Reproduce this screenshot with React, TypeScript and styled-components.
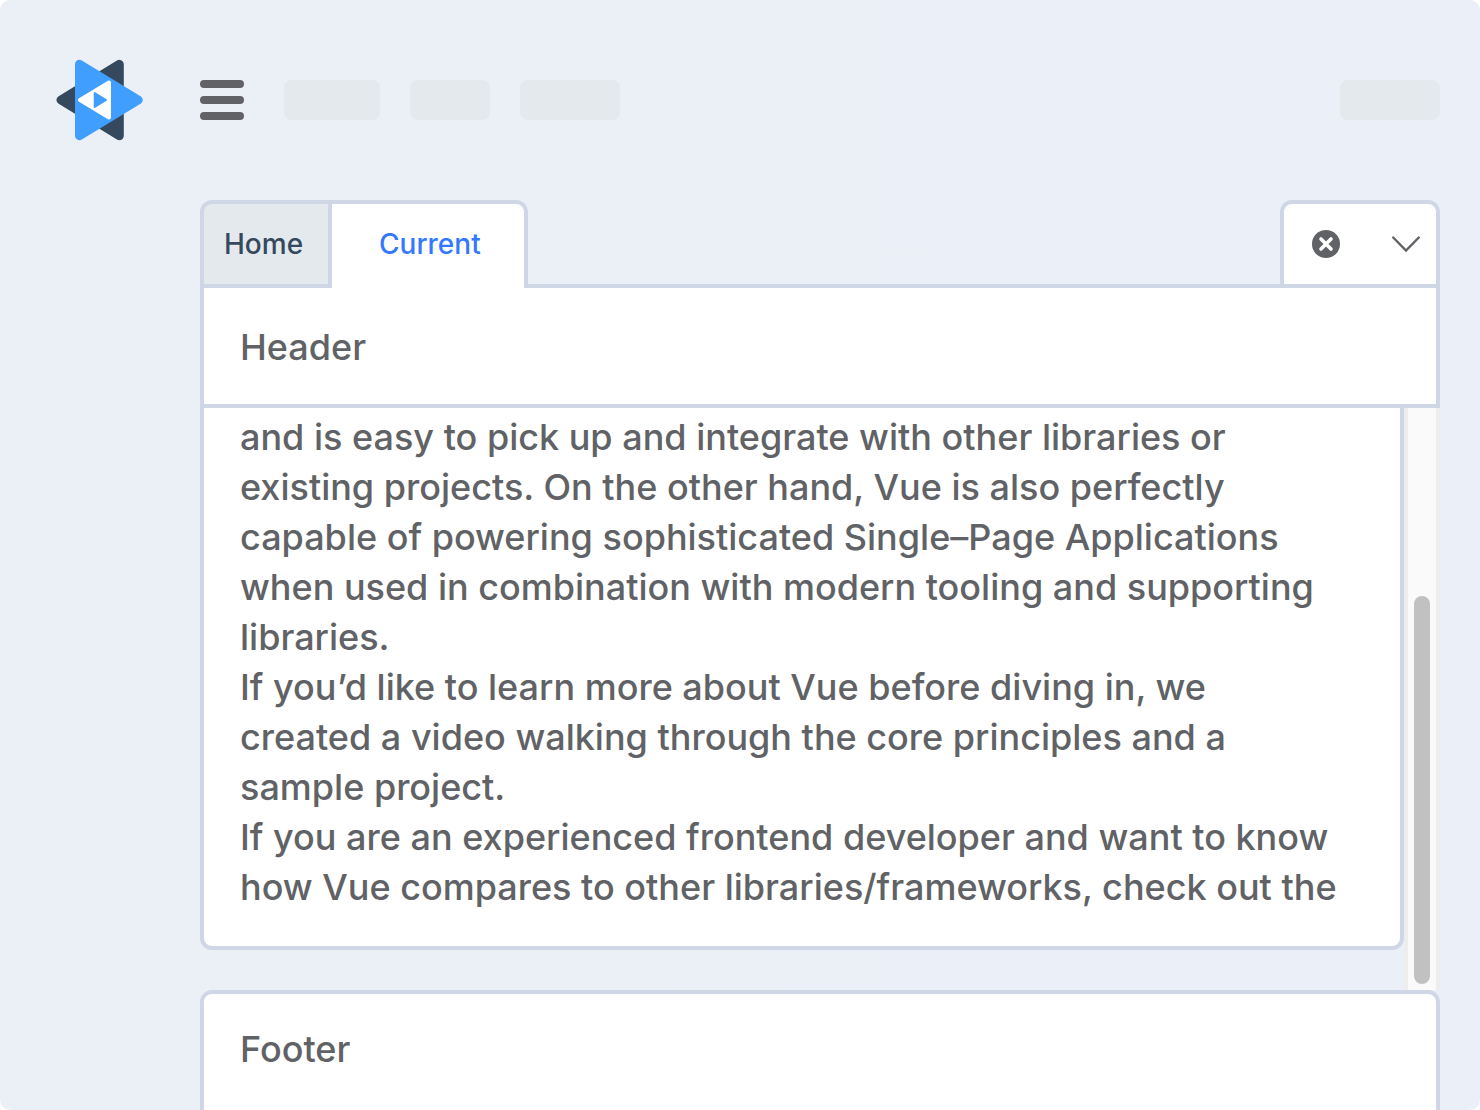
import React from "react";
import styled, { createGlobalStyle } from "styled-components";

const line = "#cfd7e6";
const ink = "#606266";

const GlobalStyle = createGlobalStyle`
  * { box-sizing: border-box; }
  body { margin: 0; background: #fff; }
`;

const Page = styled.div`
  display: flex;
  flex-direction: column;
  min-height: 100vh;
  border-radius: 10px;
  background: linear-gradient(90deg, #ebf0f6, #ebeff8);
  color: ${ink};
  font-family: Inter, "Liberation Sans", sans-serif;
  font-weight: 500;
`;

const TopBar = styled.header`
  display: flex;
  align-items: center;
  height: 200px;
  padding: 0 40px 0 56px;
`;

const Logo = styled.svg`
  width: 88px;
  height: 84px;
  margin-right: 56px;
`;

const MenuButton = styled.button`
  display: flex;
  flex-direction: column;
  gap: 8px;
  width: 44px;
  margin-right: 40px;
  padding: 0;
  border: 0;
  background: none;
`;

const MenuBar = styled.span`
  height: 8px;
  border-radius: 4px;
  background: ${ink};
`;

const Nav = styled.nav`
  display: flex;
  flex: 1;
  gap: 30px;
`;

const Placeholder = styled.div<{ $width: number }>`
  width: ${(p) => p.$width}px;
  height: 40px;
  border-radius: 8px;
  background: #e4e9ed;
`;

const Main = styled.main`
  display: flex;
  flex: 1;
  flex-direction: column;
  padding: 0 40px 0 200px;
`;

const TabBar = styled.div`
  display: flex;
  height: 88px;
`;

const Tab = styled.button<{ $active?: boolean }>`
  width: ${(p) => (p.$active ? 196 : 132)}px;
  padding: ${(p) => (p.$active ? "0 0 4px 47px" : "0 0 0 20px")};
  border: solid ${line};
  border-width: ${(p) => (p.$active ? "4px 4px 0 0" : "4px")};
  border-radius: ${(p) => (p.$active ? "0 12px 0 0" : "12px 0 0 0")};
  background: ${(p) => (p.$active ? "#fff" : "#e4e9ed")};
  color: ${(p) => (p.$active ? "#3478ff" : "#34495e")};
  font: 500 28px/40px Inter, "Liberation Sans", sans-serif;
  text-align: left;
`;

const TabRule = styled.div`
  flex: 1;
  border-bottom: 4px solid ${line};
`;

const Actions = styled.div`
  display: flex;
  align-items: center;
  justify-content: space-between;
  width: 160px;
  padding: 0 16px 0 28px;
  border: 4px solid ${line};
  border-radius: 12px 12px 0 0;
  background: #fff;
`;

const IconButton = styled.button`
  display: flex;
  padding: 0;
  border: 0;
  background: none;
  color: ${ink};
`;

const Header = styled.h1`
  margin: 0;
  padding: 34px 36px 32px;
  border: solid ${line};
  border-width: 0 4px 4px;
  background: #fff;
  font-size: 36px;
  font-weight: 500;
  line-height: 50px;
`;

const Body = styled.div`
  display: flex;
`;

const Content = styled.div`
  flex: 1;
  padding-bottom: 40px;
`;

const Article = styled.article`
  padding: 4px 36px 34px;
  border: solid ${line};
  border-width: 0 4px 4px;
  border-radius: 0 0 12px 12px;
  background: #fff;
  font-size: 36px;
  line-height: 50px;
  white-space: nowrap;
`;

const Paragraph = styled.p`
  margin: 0;
`;

const Track = styled.div`
  display: flex;
  align-items: flex-end;
  justify-content: center;
  width: 36px;
  padding: 6px 0;
  border: solid #ededed;
  border-width: 0 4px;
  background: #fafafa;
`;

const Thumb = styled.div`
  width: 16px;
  height: 68%;
  border-radius: 8px;
  background: #c1c1c1;
`;

const Footer = styled.footer`
  flex: 1;
  padding: 30px 36px 0;
  border: solid ${line};
  border-width: 4px 4px 0;
  border-radius: 12px 12px 0 0;
  background: #fff;
  font-size: 36px;
  line-height: 50px;
`;

const paragraphs = [
  [
    "and is easy to pick up and integrate with other libraries or",
    "existing projects. On the other hand, Vue is also perfectly",
    "capable of powering sophisticated Single–Page Applications",
    "when used in combination with modern tooling and supporting",
    "libraries.",
  ],
  [
    "If you’d like to learn more about Vue before diving in, we",
    "created a video walking through the core principles and a",
    "sample project.",
  ],
  [
    "If you are an experienced frontend developer and want to know",
    "how Vue compares to other libraries/frameworks, check out the",
  ],
];

export default function App() {
  return (
    <Page>
      <GlobalStyle />
      <TopBar>
        <Logo viewBox="56 58 88 84" aria-hidden="true">
          <path d="M61 100 119.300 64.300V135.700Z" fill="#34495e" stroke="#34495e" strokeWidth="9" strokeLinejoin="round" />
          <path d="M79.500 64.300 138.200 100 79.500 135.700Z" fill="#409eff" stroke="#409eff" strokeWidth="9" strokeLinejoin="round" />
          <path d="M80 100 109 82.500V117.500Z" fill="#fff" stroke="#fff" strokeWidth="4" strokeLinejoin="round" />
          <path d="M94.700 93 106 100 94.700 107Z" fill="#409eff" stroke="#409eff" strokeWidth="2" strokeLinejoin="round" />
        </Logo>
        <MenuButton aria-label="Menu">
          <MenuBar />
          <MenuBar />
          <MenuBar />
        </MenuButton>
        <Nav>
          <Placeholder $width={96} />
          <Placeholder $width={80} />
          <Placeholder $width={100} />
        </Nav>
        <Placeholder $width={100} />
      </TopBar>
      <Main>
        <TabBar role="tablist">
          <Tab role="tab" aria-selected={false}>Home</Tab>
          <Tab role="tab" aria-selected $active>Current</Tab>
          <TabRule />
          <Actions>
            <IconButton aria-label="Close tab">
              <svg width="28" height="28" viewBox="0 0 28 28">
                <circle cx="14" cy="14" r="14" fill="currentColor" />
                <path d="M9 9 19 19M19 9 9 19" stroke="#fff" strokeWidth="3.600" strokeLinecap="round" />
              </svg>
            </IconButton>
            <IconButton aria-label="More tabs">
              <svg width="28" height="28" viewBox="0 0 28 28" fill="none">
                <path d="M1.200 7.500 14 20.500 26.800 7.500" stroke="currentColor" strokeWidth="2.400" strokeLinecap="round" />
              </svg>
            </IconButton>
          </Actions>
        </TabBar>
        <Header>Header</Header>
        <Body>
          <Content>
            <Article>
              {paragraphs.map((lines) => (
                <Paragraph key={lines[0]}>
                  {lines.map((text, i) => (
                    <React.Fragment key={text}>
                      {i > 0 && <br />}
                      {text}
                    </React.Fragment>
                  ))}
                </Paragraph>
              ))}
            </Article>
          </Content>
          <Track>
            <Thumb />
          </Track>
        </Body>
        <Footer>Footer</Footer>
      </Main>
    </Page>
  );
}
